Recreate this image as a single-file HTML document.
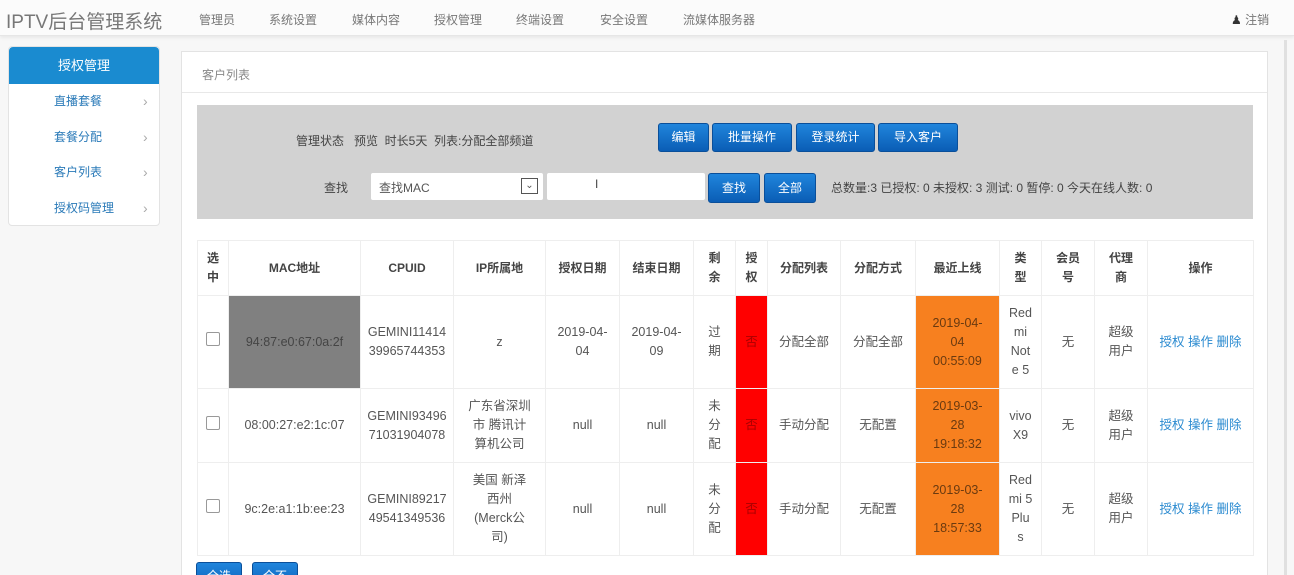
<!DOCTYPE html>
<html style="overflow:hidden"><head><meta charset="utf-8"><style>
*{box-sizing:border-box;margin:0;padding:0}
html,body{width:1294px;height:575px;overflow:hidden}
body{background:#f7f7f7;font-family:"Liberation Sans","Noto Sans CJK SC",sans-serif;font-size:12px;color:#555;position:relative}
.top{position:absolute;left:0;top:0;width:1294px;height:36px;background:#fbfbfb;border-bottom:1px solid #e6e6e6;box-shadow:0 2px 3px rgba(0,0,0,.06)}
.logo{position:absolute;left:6px;top:7px;font-size:19px;color:#777}
.nav span{position:absolute;top:11px;font-size:12px;color:#777}
.side{position:absolute;left:8px;top:46px;width:152px;height:180px;background:#fff;border:1px solid #e3e3e3;border-radius:4px}
.side .h{height:37px;background:#1a8bd0;color:#fff;text-align:center;line-height:37px;font-size:13px;border-radius:4px 4px 0 0}
.side .i{height:35.5px;line-height:35px;color:#2a7ab8;font-size:12px;padding-left:45px;position:relative}
.side .i:after{content:"›";position:absolute;left:134px;color:#aaa;font-size:14px}
.panel{position:absolute;left:181px;top:51px;width:1087px;height:524px;background:#fff;border:1px solid #e3e3e3;border-bottom:none;overflow:hidden}
.ph{height:41px;border-bottom:1px solid #e8e8e8;padding:14px 0 0 20px;color:#888}
.gray{position:absolute;left:15px;top:53px;width:1056px;height:114px;background:#d2d2d2}
.btn{position:absolute;background:linear-gradient(#2085dc,#0a5db5);color:#fff;border-radius:3px;text-align:center;font-size:12px;border:1px solid #0a4f9a}
.g{position:absolute;color:#444}
table{position:absolute;left:15px;top:188px;border-collapse:collapse;table-layout:fixed;width:1056px}
td,th{border:1px solid #eee;text-align:center;vertical-align:middle;line-height:19px;font-size:12.5px;color:#555;padding:0 3px}
th{font-weight:bold;color:#444;font-size:12px}
.cb{display:inline-block;width:14px;height:14px;border:1px solid #999;border-radius:2px;background:#fff}
.red{background:#f00;color:#a00}
.or{background:#f7801f;color:#6a3a10}
.lk{color:#2a8ad0}
</style></head><body>
<div class="top">
<div class="logo">IPTV后台管理系统</div>
<div class="nav"><span style="left:199px">管理员</span><span style="left:269px">系统设置</span><span style="left:352px">媒体内容</span><span style="left:434px">授权管理</span><span style="left:516px">终端设置</span><span style="left:600px">安全设置</span><span style="left:683px">流媒体服务器</span></div>
<div style="position:absolute;left:1231px;top:11px;color:#777"><span style="color:#333">&#9823;</span> 注销</div>
</div>
<div class="side"><div class="h">授权管理</div>
<div class="i">直播套餐</div><div class="i">套餐分配</div><div class="i">客户列表</div><div class="i">授权码管理</div></div>
<div style="position:absolute;left:1284px;top:40px;width:3px;height:535px;background:#e0e0e0"></div>
<div class="panel">
<div class="ph">客户列表</div>
<div class="gray">
<div class="g" style="left:99px;top:27px">管理状态 &nbsp; 预览 &nbsp;时长5天 &nbsp;列表:分配全部频道</div>
<div class="btn" style="left:461px;top:18px;width:51px;height:29px;line-height:27px">编辑</div>
<div class="btn" style="left:515px;top:18px;width:80px;height:29px;line-height:27px">批量操作</div>
<div class="btn" style="left:599px;top:18px;width:79px;height:29px;line-height:27px">登录统计</div>
<div class="btn" style="left:681px;top:18px;width:80px;height:29px;line-height:27px">导入客户</div>
<div class="g" style="left:127px;top:74px">查找</div>
<div style="position:absolute;left:174px;top:68px;width:172px;height:27px;background:#fff;border-radius:2px;padding:6px 0 0 8px;color:#555">查找MAC<span style="position:absolute;right:5px;top:5px;width:17px;height:16px;border:1px solid #555;font-size:10px;line-height:14px;text-align:center">&#8964;</span></div>
<div style="position:absolute;left:350px;top:68px;width:158px;height:27px;background:#fff;border-radius:2px"><span style="position:absolute;left:48px;top:4px;color:#444">I</span></div>
<div class="btn" style="left:511px;top:68px;width:52px;height:30px;line-height:28px">查找</div>
<div class="btn" style="left:567px;top:68px;width:52px;height:30px;line-height:28px">全部</div>
<div class="g" style="left:634px;top:74px">总数量:3 已授权: 0 未授权: 3 测试: 0 暂停: 0 今天在线人数: 0</div>
</div>
<table>
<colgroup><col style="width:31px"><col style="width:132px"><col style="width:93px"><col style="width:92px"><col style="width:74px"><col style="width:74px"><col style="width:42px"><col style="width:32px"><col style="width:73px"><col style="width:75px"><col style="width:84px"><col style="width:42px"><col style="width:53px"><col style="width:53px"><col style="width:106px"></colgroup>
<tr style="height:55px"><th>选<br>中</th><th>MAC地址</th><th>CPUID</th><th>IP所属地</th><th>授权日期</th><th>结束日期</th><th>剩<br>余</th><th>授<br>权</th><th>分配列表</th><th>分配方式</th><th>最近上线</th><th>类<br>型</th><th>会员<br>号</th><th>代理<br>商</th><th>操作</th></tr>
<tr style="height:93px"><td><span class="cb"></span></td><td style="background:#808080;color:#444">94:87:e0:67:0a:2f</td><td>GEMINI11414<br>39965744353</td><td>z</td><td>2019-04-<br>04</td><td>2019-04-<br>09</td><td>过<br>期</td><td class="red">否</td><td>分配全部</td><td>分配全部</td><td class="or">2019-04-<br>04<br>00:55:09</td><td>Red<br>mi<br>Not<br>e 5</td><td>无</td><td>超级<br>用户</td><td class="lk">授权 操作 删除</td></tr>
<tr style="height:74px"><td><span class="cb"></span></td><td>08:00:27:e2:1c:07</td><td>GEMINI93496<br>71031904078</td><td>广东省深圳<br>市 腾讯计<br>算机公司</td><td>null</td><td>null</td><td>未<br>分<br>配</td><td class="red">否</td><td>手动分配</td><td>无配置</td><td class="or">2019-03-<br>28<br>19:18:32</td><td>vivo<br>X9</td><td>无</td><td>超级<br>用户</td><td class="lk">授权 操作 删除</td></tr>
<tr style="height:93px"><td><span class="cb"></span></td><td>9c:2e:a1:1b:ee:23</td><td>GEMINI89217<br>49541349536</td><td>美国 新泽<br>西州<br>(Merck公<br>司)</td><td>null</td><td>null</td><td>未<br>分<br>配</td><td class="red">否</td><td>手动分配</td><td>无配置</td><td class="or">2019-03-<br>28<br>18:57:33</td><td>Red<br>mi 5<br>Plu<br>s</td><td>无</td><td>超级<br>用户</td><td class="lk">授权 操作 删除</td></tr>
</table>
<div class="btn" style="left:14px;top:510px;width:46px;height:30px;line-height:26px">全选</div>
<div class="btn" style="left:70px;top:510px;width:46px;height:30px;line-height:26px">全不</div>
</div>
</body></html>
